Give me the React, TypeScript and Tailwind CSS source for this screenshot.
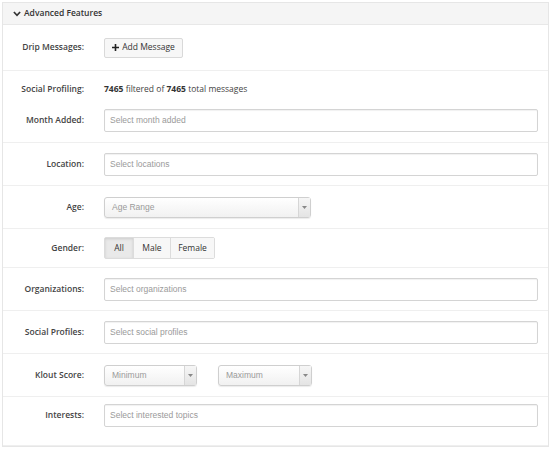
import { ReactNode } from 'react';

const labelFont = { fontFamily: '"Open Sans", "Liberation Sans", sans-serif' };
const inputFont = { fontFamily: '"Liberation Sans", Arial, sans-serif' };

function Row({ label, children, className = '' }: { label: string; children: ReactNode; className?: string }) {
  return (
    <div className={`border-b border-[#efefef] ${className}`}>
      <div className="flex items-center">
        <div
          className="w-[81px] shrink-0 text-right text-[8.5px] font-semibold text-[#444]"
          style={labelFont}
        >
          {label}
        </div>
        <div className="ml-[20px] flex flex-1 items-center pr-[10px]">{children}</div>
      </div>
    </div>
  );
}

function TextInput({ placeholder }: { placeholder: string }) {
  return (
    <div
      className="flex h-[23px] w-[434px] items-center rounded-[2px] border border-[#d4d4d4] bg-white px-[5px] text-[8.5px] text-[#9a9a9a] shadow-[inset_0_1px_1px_rgba(0,0,0,0.06)]"
      style={inputFont}
    >
      {placeholder}
    </div>
  );
}

function Select({ placeholder, width }: { placeholder: string; width: string }) {
  return (
    <div
      className={`flex h-[21px] ${width} items-stretch rounded-[3px] border border-[#cfcfcf] bg-gradient-to-b from-white to-[#f1f1f1] text-[8.5px] text-[#9a9a9a] shadow-[0_1px_1px_rgba(0,0,0,0.08)]`}
      style={inputFont}
    >
      <div className="flex flex-1 items-center px-[7px]">{placeholder}</div>
      <div className="flex w-[12px] items-center justify-center border-l border-[#d6d6d6] bg-gradient-to-b from-[#f6f6f6] to-[#e4e4e4]">
        <svg width="5" height="3" viewBox="0 0 5 3">
          <path d="M0 0h5L2.5 3z" fill="#888" />
        </svg>
      </div>
    </div>
  );
}

export default function App() {
  return (
    <div className="h-[450px] w-[553px] bg-white pl-[2px] pr-[4px] pt-[2px]">
      <div className="border border-[#e6e6e6]" style={labelFont}>
        <div className="flex h-[22px] items-center gap-[3px] border-b border-[#e8e8e8] bg-[#f5f5f5] pl-[10px] text-[8.5px] font-semibold text-[#333]">
          <svg width="8" height="6" viewBox="0 0 8 6">
            <path d="M0.9 1L4 4.3L7.1 1" fill="none" stroke="#333" strokeWidth="1.7" />
          </svg>
          Advanced Features
        </div>

        <Row label="Drip Messages:" className="flex h-[46px] items-center">
          <button
            className="flex h-[20px] w-[79px] items-center justify-center gap-[3px] rounded-[2px] border border-[#d9d9d9] bg-[#f7f7f7] text-[8.5px] text-[#333]"
            style={labelFont}
          >
            <svg width="7" height="7" viewBox="0 0 7 7">
              <path d="M3.5 0v7M0 3.5h7" stroke="#222" strokeWidth="1.6" />
            </svg>
            Add Message
          </button>
        </Row>

        <div className="flex h-[72px] flex-col border-b border-[#efefef]">
          <div className="flex h-[36px] items-center">
            <div className="w-[81px] shrink-0 text-right text-[8.5px] font-semibold text-[#444]">
              Social Profiling:
            </div>
            <div className="ml-[20px] text-[8.5px] text-[#444]">
              <span className="font-bold text-[#333]">7465</span> filtered of{' '}
              <span className="font-bold text-[#333]">7465</span> total messages
            </div>
          </div>
          <div className="flex h-[26px] items-center">
            <div className="w-[81px] shrink-0 text-right text-[8.5px] font-semibold text-[#444]">
              Month Added:
            </div>
            <div className="ml-[20px]">
              <TextInput placeholder="Select month added" />
            </div>
          </div>
        </div>

        <Row label="Location:" className="flex h-[43px] items-center">
          <TextInput placeholder="Select locations" />
        </Row>

        <Row label="Age:" className="flex h-[43px] items-center">
          <Select placeholder="Age Range" width="w-[207px]" />
        </Row>

        <Row label="Gender:" className="flex h-[39px] items-center">
          <div className="flex h-[22px] rounded-[2px] border border-[#dcdcdc] text-[8.5px] text-[#333]">
            <div className="flex w-[28px] items-center justify-center bg-[#e9e9e9] shadow-[inset_0_1px_3px_rgba(0,0,0,0.12)]">
              All
            </div>
            <div className="flex w-[37px] items-center justify-center border-l border-[#dcdcdc] bg-[#f7f7f7]">
              Male
            </div>
            <div className="flex w-[44px] items-center justify-center border-l border-[#dcdcdc] bg-[#f7f7f7]">
              Female
            </div>
          </div>
        </Row>

        <Row label="Organizations:" className="flex h-[43px] items-center">
          <TextInput placeholder="Select organizations" />
        </Row>

        <Row label="Social Profiles:" className="flex h-[43px] items-center">
          <TextInput placeholder="Select social profiles" />
        </Row>

        <Row label="Klout Score:" className="flex h-[43px] items-center">
          <div className="flex gap-[21px]">
            <Select placeholder="Minimum" width="w-[93px]" />
            <Select placeholder="Maximum" width="w-[94px]" />
          </div>
        </Row>

        <Row label="Interests:" className="h-[49px] pt-[7px]">
          <TextInput placeholder="Select interested topics" />
        </Row>
      </div>
    </div>
  );
}
